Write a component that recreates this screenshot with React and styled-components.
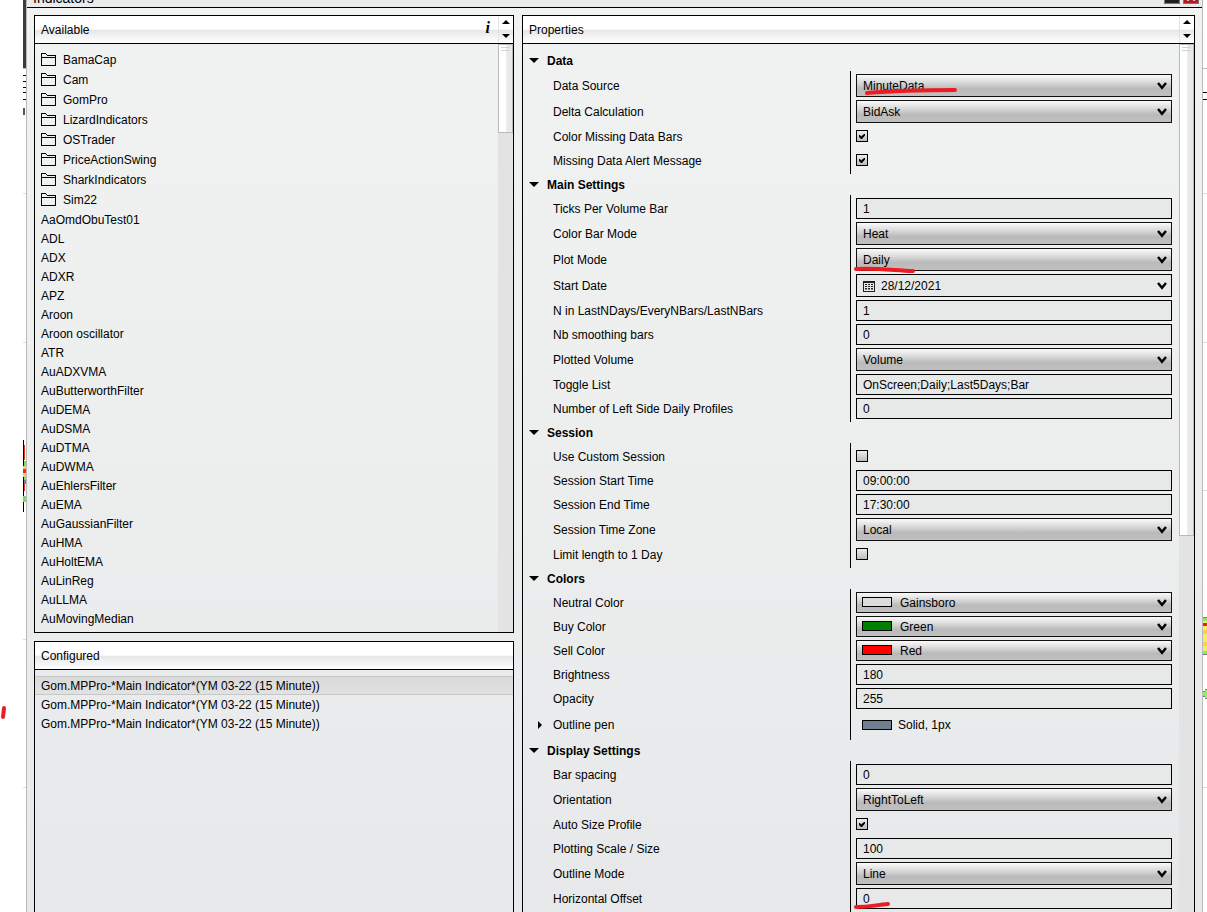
import React from "react";
import styled, { createGlobalStyle } from "styled-components";

const folders = [
  "BamaCap",
  "Cam",
  "GomPro",
  "LizardIndicators",
  "OSTrader",
  "PriceActionSwing",
  "SharkIndicators",
  "Sim22",
];

const indicators = [
  "AaOmdObuTest01",
  "ADL",
  "ADX",
  "ADXR",
  "APZ",
  "Aroon",
  "Aroon oscillator",
  "ATR",
  "AuADXVMA",
  "AuButterworthFilter",
  "AuDEMA",
  "AuDSMA",
  "AuDTMA",
  "AuDWMA",
  "AuEhlersFilter",
  "AuEMA",
  "AuGaussianFilter",
  "AuHMA",
  "AuHoltEMA",
  "AuLinReg",
  "AuLLMA",
  "AuMovingMedian",
];

const configured = [
  "Gom.MPPro-*Main Indicator*(YM 03-22 (15 Minute))",
  "Gom.MPPro-*Main Indicator*(YM 03-22 (15 Minute))",
  "Gom.MPPro-*Main Indicator*(YM 03-22 (15 Minute))",
];

const sections = [
  {
    title: "Data",
    rows: [
      { label: "Data Source", type: "select", value: "MinuteData", mark: "M11 21C35 19 65 18 99 18" },
      { label: "Delta Calculation", type: "select", value: "BidAsk" },
      { label: "Color Missing Data Bars", type: "check", value: true },
      { label: "Missing Data Alert Message", type: "check", value: true },
    ],
  },
  {
    title: "Main Settings",
    rows: [
      { label: "Ticks Per Volume Bar", type: "text", value: "1" },
      { label: "Color Bar Mode", type: "select", value: "Heat" },
      { label: "Plot Mode", type: "select", value: "Daily", mark: "M0 23C20 22 35 24 57 25" },
      { label: "Start Date", type: "date", value: "28/12/2021" },
      { label: "N in LastNDays/EveryNBars/LastNBars", type: "text", value: "1" },
      { label: "Nb smoothing bars", type: "text", value: "0" },
      { label: "Plotted Volume", type: "select", value: "Volume" },
      { label: "Toggle List", type: "text", value: "OnScreen;Daily;Last5Days;Bar" },
      { label: "Number of Left Side Daily Profiles", type: "text", value: "0" },
    ],
  },
  {
    title: "Session",
    rows: [
      { label: "Use Custom Session", type: "check", value: false },
      { label: "Session Start Time", type: "text", value: "09:00:00" },
      { label: "Session End Time", type: "text", value: "17:30:00" },
      { label: "Session Time Zone", type: "select", value: "Local" },
      { label: "Limit length to 1 Day", type: "check", value: false },
    ],
  },
  {
    title: "Colors",
    rows: [
      { label: "Neutral Color", type: "color", value: "Gainsboro", color: "#dcdcdc" },
      { label: "Buy Color", type: "color", value: "Green", color: "#008000" },
      { label: "Sell Color", type: "color", value: "Red", color: "#ff0000" },
      { label: "Brightness", type: "text", value: "180" },
      { label: "Opacity", type: "text", value: "255" },
      { label: "Outline pen", type: "pen", value: "Solid, 1px", color: "#708090" },
    ],
  },
  {
    title: "Display Settings",
    rows: [
      { label: "Bar spacing", type: "text", value: "0" },
      { label: "Orientation", type: "select", value: "RightToLeft" },
      { label: "Auto Size Profile", type: "check", value: true },
      { label: "Plotting Scale / Size", type: "text", value: "100" },
      { label: "Outline Mode", type: "select", value: "Line" },
      { label: "Horizontal Offset", type: "text", value: "0", mark: "M0 21C14 21 20 19 32 18" },
    ],
  },
];

const FolderIcon = () => (
  <svg width="15" height="14" viewBox="0 0 15 14" fill="none" stroke="#000" shapeRendering="crispEdges">
    <path d="M.5 12.5V.5H4.5L6.5 2.5H14.5V12.5ZM.5 4.5H14.5" />
  </svg>
);

const Chevron = () => (
  <ChevronSvg width="10" height="8" viewBox="0 0 10 8" fill="none" stroke="#000" strokeWidth="2.4">
    <path d="M1 1L5 5.8L9 1" />
  </ChevronSvg>
);

const CalendarIcon = () => (
  <CalendarSvg width="12" height="11" viewBox="0 0 12 11" shapeRendering="crispEdges">
    <path d="M0 0H12V11H0ZM1 2V10H11V2Z" fill="#222" fillRule="evenodd" />
    <path d="M2 3.5H10M2 5.5H10M2 7.5H10" stroke="#222" strokeDasharray="2 1" />
    <path d="M2 8.5H10" stroke="#888" strokeDasharray="2 1" />
  </CalendarSvg>
);

const Triangle = ({ up }) => (
  <svg width="8" height="4" viewBox="0 0 8 4">
    <path d={up ? "M0 4L4 0L8 4Z" : "M0 0L4 4L8 0Z"} />
  </svg>
);

const ScrollArrows = () => (
  <Arrows>
    <ArrowBtn aria-label="Scroll up">
      <Triangle up />
    </ArrowBtn>
    <ArrowBtn aria-label="Scroll down">
      <Triangle />
    </ArrowBtn>
  </Arrows>
);

const ScrollBar = ({ size }) => (
  <Track>
    <Thumb $size={size}>
      <Grip />
    </Thumb>
  </Track>
);

const Control = ({ row, id }) => {
  if (row.type === "check") {
    return (
      <CheckWrap>
        <Check id={id} type="checkbox" defaultChecked={row.value} />
        <Tick width="6" height="6" viewBox="0 0 6 6">
          <path d="M0 1H1L2 2.5L5 0H6V1.5L3 5H2L0 3Z" />
        </Tick>
      </CheckWrap>
    );
  }
  if (row.type === "pen") {
    return (
      <Pen id={id}>
        <Swatch $color={row.color} />
        {row.value}
      </Pen>
    );
  }
  if (row.type === "date") {
    return (
      <Field>
        <Input id={id} defaultValue={row.value} $date />
        <CalendarIcon />
        <Chevron />
      </Field>
    );
  }
  if (row.type === "text") {
    return <Input id={id} defaultValue={row.value} />;
  }
  return (
    <Field>
      <Select id={id} $swatch={row.type === "color"}>
        <option>{row.value}</option>
      </Select>
      {row.color && <FieldSwatch $color={row.color} />}
      <Chevron />
    </Field>
  );
};

const PropertyRow = ({ row }) => {
  const id = row.label.toLowerCase().replace(/[^a-z0-9]+/g, "-");
  return (
    <Row>
      <Label htmlFor={row.type === "pen" ? undefined : id} as={row.type === "pen" ? "span" : "label"}>
        {row.type === "pen" && (
          <PenArrow aria-label="Expand outline pen">
            <svg width="4" height="8" viewBox="0 0 4 8">
              <path d="M0 0L4 4L0 8Z" />
            </svg>
          </PenArrow>
        )}
        {row.label}
      </Label>
      <Cell>
        <Control row={row} id={id} />
        {row.mark && (
          <Mark width="110" height="28" fill="none" stroke="#ed1c24" strokeWidth="4" strokeLinecap="round">
            <path d={row.mark} />
          </Mark>
        )}
      </Cell>
    </Row>
  );
};

// slices of the chart that stay visible on both sides of the window
const ChartLeft = () => (
  <svg width="26" height="912" shapeRendering="crispEdges">
    <path d="M23 0H26V68H23Z" fill="#3c3c3c" />
    <path d="M23 68.5H26" stroke="#b8b8b8" />
    <path d="M23 75.5H26M23 81.5H26M23 87.5H26M23 92.5H26M23 99.5H26" stroke="#000" />
    <path d="M23 108H25V115H23Z" fill="#555" />
    <path d="M23 193.5H26M23 342.5H26M23 639.5H26M23 787.5H26" stroke="#ddd" />
    <path d="M23.5 440V512" stroke="#000" />
    <path d="M24.5 445V460M24.5 484V491" stroke="#e03c2c" />
    <path d="M24 461H26V466H24ZM24 477H26V480H24ZM23 496H26V502H23Z" fill="#6ee85a" />
    <path d="M23 466H26V469H23ZM23 473H26V477H23Z" fill="#ffc95c" />
    <path d="M23 469H26V473H23Z" fill="#f5281e" />
    <path d="M24 480H26V484H24Z" fill="#708090" />
    <path d="M4 708L3 717" stroke="#ed1c24" strokeWidth="4" strokeLinecap="round" shapeRendering="auto" />
  </svg>
);

const ChartRight = () => (
  <svg width="4" height="912" shapeRendering="crispEdges">
    <path d="M0 68.5H4" stroke="#b8b8b8" />
    <path d="M0 92.5H4M0 99.5H4" stroke="#000" />
    <path d="M0 193.5H4M0 342.5H4M0 490.5H4M0 787.5H4" stroke="#ddd" />
    <path d="M0 617H4V655H0Z" fill="#f2f060" />
    <path d="M0 618H4V621H0ZM0 651H4V654H0Z" fill="#7cf060" />
    <path d="M0 630H4V634H0ZM0 642H4V646H0Z" fill="#ffc95c" />
    <path d="M0 623H4V626H0Z" fill="#ff1400" />
    <path d="M0 617.5H4M0 654.5H4" stroke="#708090" />
    <path d="M0 691H2V690H4V698H2V697H0Z" fill="#84f45a" />
    <path d="M0 691.5H2M2 689.5H4M0 696.5H2M2 698.5H4" stroke="#708090" />
  </svg>
);

const App = () => {
  return (
    <Page>
      <GlobalStyle />
      <ChartLeft />
      <Window>
        <TitleBar>
          <Title>Indicators</Title>
          <WindowBtn aria-label="Minimize" />
          <WindowBtn aria-label="Close" $close>
            <svg width="8" height="8" viewBox="0 0 8 8" stroke="#e8c8c8" strokeWidth="2">
              <path d="M0 0L8 8M8 0L0 8" />
            </svg>
          </WindowBtn>
        </TitleBar>
        <Content>
          <LeftColumn>
            <Panel>
              <Header>
                <HeaderTitle>Available</HeaderTitle>
                <InfoBtn>i</InfoBtn>
                <ScrollArrows />
              </Header>
              <Body>
                <List>
                  {folders.map((name) => (
                    <Folder key={name}>
                      <FolderIcon />
                      {name}
                    </Folder>
                  ))}
                  {indicators.map((name) => (
                    <Item key={name}>{name}</Item>
                  ))}
                </List>
                <ScrollBar size={89} />
              </Body>
            </Panel>
            <Panel $fill>
              <Header>
                <HeaderTitle>Configured</HeaderTitle>
              </Header>
              <List>
                {configured.map((name, index) => (
                  <Item key={index} $selected={index === 0}>
                    {name}
                  </Item>
                ))}
              </List>
            </Panel>
          </LeftColumn>
          <Panel $fill>
            <Header>
              <HeaderTitle>Properties</HeaderTitle>
              <ScrollArrows />
            </Header>
            <Body>
              <Properties>
                {sections.map((section) => (
                  <section key={section.title}>
                    <SectionBtn>
                      <svg width="10" height="5" viewBox="0 0 10 5">
                        <path d="M0 0H10L5 5Z" />
                      </svg>
                      {section.title}
                    </SectionBtn>
                    <Rows>
                      {section.rows.map((row) => (
                        <PropertyRow key={row.label} row={row} />
                      ))}
                    </Rows>
                  </section>
                ))}
              </Properties>
              <ScrollBar size={492} />
            </Body>
          </Panel>
        </Content>
      </Window>
      <ChartRight />
    </Page>
  );
};

const GlobalStyle = createGlobalStyle`
  * {
    box-sizing: border-box;
  }
  body {
    margin: 0;
    background: #fff;
  }
  body, button, input, select {
    font-family: "Liberation Sans", Arial, sans-serif;
    font-size: 12px;
    color: #000;
  }
  svg {
    display: block;
    flex-shrink: 0;
  }
`;

const Page = styled.div`
  display: flex;
  height: 100vh;
  overflow: hidden;
`;

const Window = styled.div`
  flex: 1;
  min-width: 0;
  display: flex;
  flex-direction: column;
  border-left: 1px solid #b9b9b9;
  border-right: 1px solid #b9b9b9;
  background: linear-gradient(#f1f3f2, #eceeee 55%, #e7e8ea);
`;

const TitleBar = styled.div`
  display: flex;
  align-items: flex-end;
  gap: 3px;
  height: 8px;
  padding: 0 3px 0 6px;
  overflow: hidden;
  background: #e9eaeb;
  border-bottom: 1px solid #000;
`;

const Title = styled.span`
  flex: 1;
  font-size: 14px;
  line-height: 18px;
`;

const WindowBtn = styled.button`
  display: flex;
  align-items: flex-end;
  justify-content: center;
  width: 16px;
  height: 16px;
  margin-bottom: 3px;
  padding: 0 0 2px;
  border: 1px solid #777;
  background: ${(props) => (props.$close ? "#b01c24" : "#231f20")};
`;

const Content = styled.div`
  flex: 1;
  min-height: 0;
  display: grid;
  grid-template-columns: 480fr 673fr;
  gap: 8px;
  padding: 7px 7px 0;
`;

const LeftColumn = styled.div`
  display: flex;
  flex-direction: column;
  gap: 8px;
  min-height: 0;
`;

const Panel = styled.div`
  display: flex;
  flex-direction: column;
  flex: ${(props) => (props.$fill ? "1" : "none")};
  min-height: 0;
  border: 1px solid #000;
  border-bottom-width: ${(props) => (props.$fill ? "0" : "1px")};
`;

const Header = styled.div`
  display: flex;
  flex-shrink: 0;
  height: 28px;
  padding-left: 6px;
  border-bottom: 1px solid #000;
  background: linear-gradient(#fff 48%, #e6e8e8 54%, #fff);
`;

const HeaderTitle = styled.h2`
  flex: 1;
  margin: 0;
  font-size: 12px;
  font-weight: 400;
  line-height: 28px;
`;

const InfoBtn = styled.button`
  padding: 0 8px 4px;
  border: none;
  background: none;
  font-family: "Liberation Serif", serif;
  font-size: 16px;
  font-style: italic;
  font-weight: 700;
  line-height: 20px;
`;

const Arrows = styled.div`
  display: flex;
  flex-direction: column;
  justify-content: space-between;
  width: 15px;
  border-left: 1px solid #e2e2e2;
`;

const ArrowBtn = styled.button`
  display: flex;
  justify-content: center;
  padding: 4px 0 5px;
  border: none;
  background: none;
`;

const Body = styled.div`
  flex: 1;
  min-height: 0;
  display: flex;
`;

const Track = styled.div`
  width: 15px;
  flex-shrink: 0;
  background: #e3e3e3;
`;

const Thumb = styled.div`
  height: ${(props) => props.$size}px;
  padding: 2px;
  border: 1px solid #bababa;
  background: linear-gradient(90deg, #fff 50%, #e9e9e9 60%);
`;

const Grip = styled.div`
  height: 4px;
  border-top: 1px solid #d2d2d2;
  border-bottom: 1px solid #d2d2d2;
`;

const List = styled.ul`
  flex: 1;
  margin: 0;
  padding: 6px 0 4px;
  list-style: none;
`;

const Folder = styled.li`
  display: flex;
  align-items: center;
  gap: 7px;
  height: 20px;
  padding-left: 6px;
`;

const Item = styled.li`
  height: 19px;
  padding-left: 6px;
  line-height: 20px;
  ${(props) =>
    props.$selected &&
    `
    background: linear-gradient(#d9d9d9, #e2e2e2);
    box-shadow: inset 0 1px #c6c8c8, inset 0 -1px #c6c8c8;
  `}
`;

const Properties = styled.div`
  flex: 1;
  min-width: 0;
  padding: 6px 2px 0 0;
  overflow: hidden;
`;

const SectionBtn = styled.button`
  display: flex;
  align-items: center;
  gap: 8px;
  width: 100%;
  height: 21px;
  padding: 0 6px;
  border: none;
  background: none;
  font-weight: 700;
`;

const Rows = styled.div`
  display: flex;
  flex-direction: column;
`;

const Row = styled.div`
  display: grid;
  grid-template-columns: 1fr 1fr;

  &:last-child > * {
    padding-bottom: 3px;
  }
`;

const Label = styled.label`
  position: relative;
  display: flex;
  align-items: center;
  padding: 3px 0 0 30px;
`;

const PenArrow = styled.button`
  position: absolute;
  left: 15px;
  padding: 0;
  border: none;
  background: none;
`;

const Cell = styled.div`
  position: relative;
  padding: 3px 5px 0;
  border-left: 1px solid #000;
`;

const Field = styled.div`
  position: relative;
`;

const Input = styled.input`
  display: block;
  width: 100%;
  height: ${(props) => (props.$date ? "23px" : "21px")};
  padding: 0 6px 0 ${(props) => (props.$date ? "24px" : "6px")};
  border: 1px solid #000;
  border-radius: 0;
  background: #e7e9e8;
`;

const Select = styled.select`
  display: block;
  appearance: none;
  width: 100%;
  height: ${(props) => (props.$swatch ? "21px" : "23px")};
  padding: 0 20px 0 ${(props) => (props.$swatch ? "43px" : "6px")};
  border: 1px solid #111;
  border-radius: 0;
  background: linear-gradient(#fafafa, #dadada 35%, #bababa 65%, #c0c0c0);
`;

const ChevronSvg = styled.svg`
  position: absolute;
  top: 50%;
  right: 5px;
  margin-top: -4px;
  pointer-events: none;
`;

const CalendarSvg = styled.svg`
  position: absolute;
  top: 7px;
  left: 7px;
`;

const Swatch = styled.span`
  width: 30px;
  height: 10px;
  border: 1px solid #000;
  background: ${(props) => props.$color};
`;

const FieldSwatch = styled(Swatch)`
  position: absolute;
  top: 5px;
  left: 6px;
  pointer-events: none;
`;

const Pen = styled.div`
  display: flex;
  align-items: center;
  gap: 6px;
  height: 25px;
  padding-left: 6px;
`;

const CheckWrap = styled.span`
  position: relative;
  display: flex;
  height: 21px;
  padding-top: 4px;
`;

const Check = styled.input`
  appearance: none;
  width: 12px;
  height: 12px;
  margin: 0;
  border: 1px solid #000;
  background: linear-gradient(#ececec, #bcbcbc);

  &:not(:checked) + svg {
    display: none;
  }
`;

const Tick = styled.svg`
  position: absolute;
  top: 8px;
  left: 3px;
  pointer-events: none;
`;

const Mark = styled.svg`
  position: absolute;
  top: 1px;
  left: 5px;
  overflow: visible;
  pointer-events: none;
`;

export default App;
